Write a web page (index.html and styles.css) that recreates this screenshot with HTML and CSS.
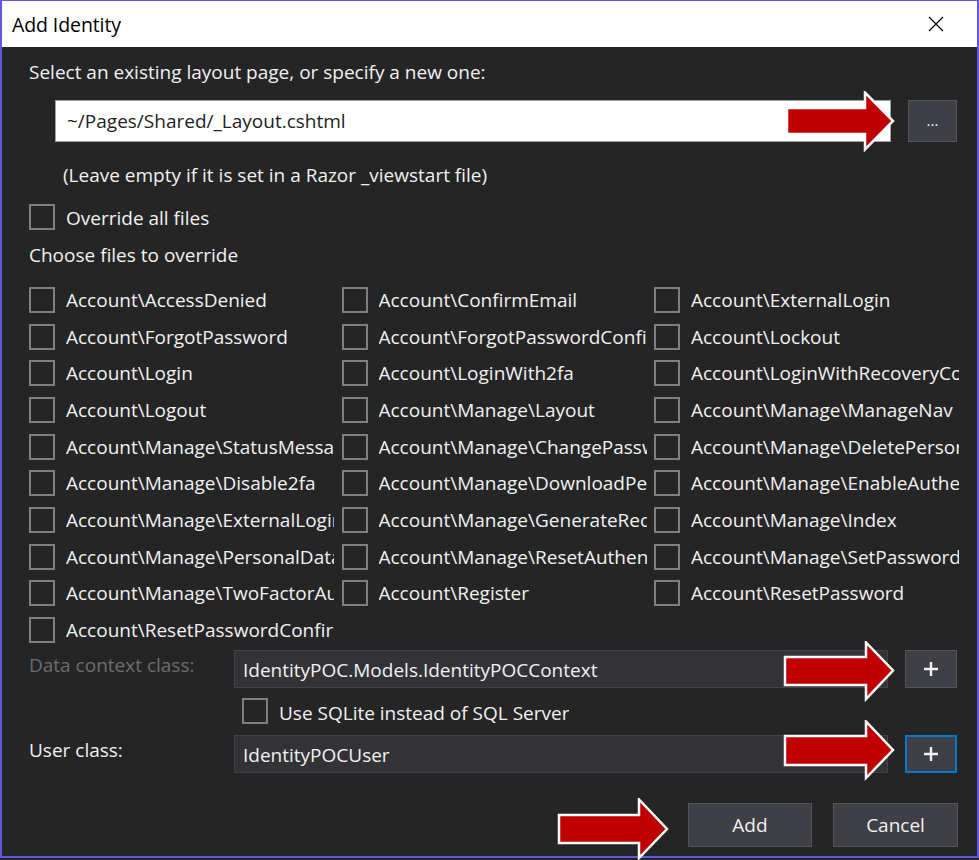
FILE: index.html
```html
<!DOCTYPE html>
<html>
<head>
<meta charset="utf-8">
<link rel="stylesheet" href="styles.css">
</head>
<body>
<div class="window">
  <div class="titlebar">
    <span class="title">Add Identity</span>
    <svg class="close" width="16" height="16" viewBox="0 0 16 16"><path d="M1 1 L15 15 M15 1 L1 15" stroke="#000" stroke-width="1.3" fill="none"/></svg>
  </div>
  <div class="content">
    <div class="label first">Select an existing layout page, or specify a new one:</div>
    <div class="layout-row">
      <div class="layout-input">~/Pages/Shared/_Layout.cshtml</div>
      <div class="btn dots">...</div>
    </div>
    <div class="hint">(Leave empty if it is set in a Razor _viewstart file)</div>
    <div class="check-row override"><span class="box"></span><span class="ctext">Override all files</span></div>
    <div class="label choose">Choose files to override</div>
    <div class="grid">
      <div class="cell"><span class="box"></span><span class="ctext">Account\AccessDenied</span></div>
      <div class="cell"><span class="box"></span><span class="ctext">Account\ConfirmEmail</span></div>
      <div class="cell"><span class="box"></span><span class="ctext">Account\ExternalLogin</span></div>
      <div class="cell"><span class="box"></span><span class="ctext">Account\ForgotPassword</span></div>
      <div class="cell"><span class="box"></span><span class="ctext">Account\ForgotPasswordConfirmation</span></div>
      <div class="cell"><span class="box"></span><span class="ctext">Account\Lockout</span></div>
      <div class="cell"><span class="box"></span><span class="ctext">Account\Login</span></div>
      <div class="cell"><span class="box"></span><span class="ctext">Account\LoginWith2fa</span></div>
      <div class="cell"><span class="box"></span><span class="ctext">Account\LoginWithRecoveryCode</span></div>
      <div class="cell"><span class="box"></span><span class="ctext">Account\Logout</span></div>
      <div class="cell"><span class="box"></span><span class="ctext">Account\Manage\Layout</span></div>
      <div class="cell"><span class="box"></span><span class="ctext">Account\Manage\ManageNav</span></div>
      <div class="cell"><span class="box"></span><span class="ctext">Account\Manage\StatusMessage</span></div>
      <div class="cell"><span class="box"></span><span class="ctext">Account\Manage\ChangePassword</span></div>
      <div class="cell"><span class="box"></span><span class="ctext">Account\Manage\DeletePersonalData</span></div>
      <div class="cell"><span class="box"></span><span class="ctext">Account\Manage\Disable2fa</span></div>
      <div class="cell"><span class="box"></span><span class="ctext">Account\Manage\DownloadPersonalData</span></div>
      <div class="cell"><span class="box"></span><span class="ctext">Account\Manage\EnableAuthenticator</span></div>
      <div class="cell"><span class="box"></span><span class="ctext">Account\Manage\ExternalLogins</span></div>
      <div class="cell"><span class="box"></span><span class="ctext">Account\Manage\GenerateRecoveryCodes</span></div>
      <div class="cell"><span class="box"></span><span class="ctext">Account\Manage\Index</span></div>
      <div class="cell"><span class="box"></span><span class="ctext">Account\Manage\PersonalData</span></div>
      <div class="cell"><span class="box"></span><span class="ctext">Account\Manage\ResetAuthenticator</span></div>
      <div class="cell"><span class="box"></span><span class="ctext">Account\Manage\SetPassword</span></div>
      <div class="cell"><span class="box"></span><span class="ctext">Account\Manage\TwoFactorAuthentication</span></div>
      <div class="cell"><span class="box"></span><span class="ctext">Account\Register</span></div>
      <div class="cell"><span class="box"></span><span class="ctext">Account\ResetPassword</span></div>
      <div class="cell"><span class="box"></span><span class="ctext">Account\ResetPasswordConfirmation</span></div>
    </div>
    <div class="field-row ctx">
      <div class="flabel disabled">Data context class:</div>
      <div class="finput">IdentityPOC.Models.IdentityPOCContext</div>
      <div class="btn plus"><svg width="16" height="16" viewBox="0 0 16 16"><path d="M8 1 V15 M1 8 H15" stroke="#f1f1f1" stroke-width="2.4" fill="none"/></svg></div>
    </div>
    <div class="check-row sqlite"><span class="box"></span><span class="ctext">Use SQLite instead of SQL Server</span></div>
    <div class="field-row user">
      <div class="flabel">User class:</div>
      <div class="finput">IdentityPOCUser</div>
      <div class="btn plus focused"><svg width="16" height="16" viewBox="0 0 16 16"><path d="M8 1 V15 M1 8 H15" stroke="#f1f1f1" stroke-width="2.4" fill="none"/></svg></div>
    </div>
    <div class="actions">
      <div class="btn action">Add</div>
      <div class="btn action">Cancel</div>
    </div>
  </div>

  <svg class="arrow a1" width="110" height="62" viewBox="0 0 110 62"><path d="M2 17 H80 V1.5 L108 30 L80 58.5 V43 H2 Z" fill="#c00000" stroke="#fff" stroke-width="2.5"/></svg>
  <svg class="arrow a2" width="112" height="62" viewBox="0 0 112 62"><path d="M2 16 H83 V1.5 L110 29.5 L83 58 V44 H2 Z" fill="#c00000" stroke="#fff" stroke-width="2.5"/></svg>
  <svg class="arrow a3" width="112" height="62" viewBox="0 0 112 62"><path d="M2 16 H83 V1.5 L110 30 L83 58 V45 H2 Z" fill="#c00000" stroke="#fff" stroke-width="2.5"/></svg>
  <svg class="arrow a4" width="112" height="62" viewBox="0 0 112 62"><path d="M2 17 H82 V1.5 L110 31 L82 60 V45 H2 Z" fill="#c00000" stroke="#fff" stroke-width="2.5"/></svg>
</div>
</body>
</html>
```

FILE: styles.css
```css
* { box-sizing: border-box; }
html, body { margin: 0; padding: 0; background: #252526; }
body { width: 979px; height: 860px; overflow: hidden; font-family: "Open Sans", "Noto Sans", sans-serif; }

.window {
  position: relative;
  width: 979px;
  height: 858px;
  border: 2px solid #5f57e4;
  border-top-width: 1px;
  background: #252526;
  color: #f1f1f1;
  display: flex;
  flex-direction: column;
}

.titlebar {
  height: 46px;
  background: #ffffff;
  display: flex;
  align-items: center;
  justify-content: space-between;
  padding: 0 33px 0 10px;
  flex: none;
}
.title { font-size: 19.5px; color: #000; letter-spacing: -0.1px; }
.close { display: block; margin-top: 0; }

.content {
  padding: 13px 19px 0 27px;
  display: flex;
  flex-direction: column;
  font-size: 19px;
}

.label { line-height: 24px; height: 24px; }
.layout-row { display: flex; margin: 16px 0 0 26px; gap: 17px; }
.layout-input {
  width: 836px;
  height: 42px;
  background: #fff;
  border: 1px solid #a0a0a0;
  color: #1e1e1e;
  font-size: 19px;
  line-height: 40px;
  padding-left: 11px;
}
.btn {
  background: #3f3f46;
  border: 1px solid #55555c;
  color: #f1f1f1;
  display: flex;
  align-items: center;
  justify-content: center;
}
.dots { width: 49px; height: 42px; font-size: 15px; padding-bottom: 2px; }

.hint { margin: 21px 0 0 34px; line-height: 24px; height: 24px; }

.check-row { display: flex; align-items: center; gap: 11px; height: 26px; }
.override { margin-top: 17px; }
.override .ctext { position: relative; top: 1px; }
.box {
  width: 26px;
  height: 26px;
  border: 2px solid #7f7f7f;
  flex: none;
}
.ctext { line-height: 26px; white-space: nowrap; overflow: hidden; }

.choose { margin-top: 13px; }

.grid {
  margin-top: 14.6px;
  display: grid;
  grid-template-columns: repeat(3, 312.5px);
  grid-auto-rows: 36.7px;
}
.cell { display: flex; align-items: center; gap: 11px; min-width: 0; }
.cell .ctext { width: 268px; }

.field-row { display: flex; align-items: flex-start; }
.ctx { margin-top: 1.4px; }
.flabel { width: 205px; line-height: 30px; flex: none; }
.flabel.disabled { color: #6d6d6d; }
.finput {
  width: 654px;
  height: 38px;
  background: #333337;
  border: 1px solid #434346;
  line-height: 38px;
  padding-left: 8px;
  flex: none;
}
.plus { width: 52px; height: 38px; margin-left: 17px; }
.plus svg { display: block; }
.focused { border: 2px solid #007acc; }

.sqlite { margin: 10px 0 0 213px; }
.sqlite .ctext { position: relative; top: 2px; }
.user { margin-top: 11px; }

.actions { display: flex; justify-content: flex-end; gap: 21px; margin-top: 30px; }
.action { width: 124px; height: 44px; font-size: 19px; }
.action + .action { width: 125px; }

.arrow { position: absolute; }
.a1 { left: 783px; top: 90px; }
.a2 { left: 781px; top: 640px; }
.a3 { left: 781px; top: 719px; }
.a4 { left: 555px; top: 797px; }
```
